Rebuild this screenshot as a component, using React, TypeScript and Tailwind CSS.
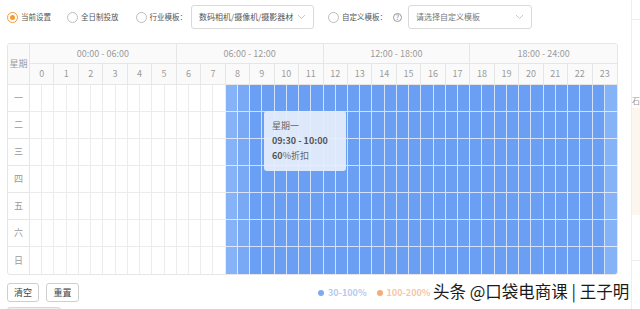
import React from 'react';

const days = ['一', '二', '三', '四', '五', '六', '日'];
const ranges = ['00:00 - 06:00', '06:00 - 12:00', '12:00 - 18:00', '18:00 - 24:00'];

function Radio({ checked, label }: { checked?: boolean; label: string }) {
    return (
        <label className="flex items-center gap-[3px] text-[7.5px] text-[#555] whitespace-nowrap">
            <span
                className={
                    checked
                        ? 'w-[11px] h-[11px] rounded-full border border-[#f39c34] flex items-center justify-center'
                        : 'w-[11px] h-[11px] rounded-full border border-[#bdbdbd]'
                }
            >
                {checked && <span className="w-[5px] h-[5px] rounded-full bg-[#f39c34]" />}
            </span>
            {label}
        </label>
    );
}

function Select({ text, placeholder, width }: { text: string; placeholder?: boolean; width: string }) {
    return (
        <div className={`${width} h-[24px] border border-[#d9d9d9] rounded-[3px] flex items-center justify-between pl-[7px] pr-[7px] bg-white`}>
            <span className={placeholder ? 'text-[8px] text-[#777] whitespace-nowrap' : 'text-[8px] text-[#555] whitespace-nowrap'}>{text}</span>
            <svg width="9" height="6" viewBox="0 0 9 6" fill="none" className="shrink-0">
                <path d="M1 1l3.5 3.5L8 1" stroke="#c8c8c8" strokeWidth="1" />
            </svg>
        </div>
    );
}

function cellColor(i: number) {
    if (i < 16) return 'bg-white border-[#ececec]';
    if (i === 16 || i === 47) return 'bg-[#86b3f7] border-white/70';
    if (i === 17) return 'bg-[#79a9f5] border-white/70';
    return 'bg-[#6b9ff3] border-white/70';
}

export default function App() {
    return (
        <div className="w-[640px] h-[309px] overflow-hidden bg-white flex" style={{ fontFamily: '"Noto Sans CJK SC", "Liberation Sans", sans-serif' }}>
            <div className="w-[631px] shrink-0 relative">
                {/* top options */}
                <div className="flex items-center h-[24px] mt-[5px] pl-[7px]">
                    <Radio checked label="当前设置" />
                    <div className="ml-[16px]"><Radio label="全日制投放" /></div>
                    <div className="ml-[17px] flex items-center gap-[4px]">
                        <Radio label="行业模板：" />
                        <Select text="数码相机/摄像机/摄影器材" width="w-[123px]" />
                    </div>
                    <div className="ml-[14px] flex items-center gap-[6px]">
                        <Radio label="自定义模板：" />
                        <span className="w-[9px] h-[9px] rounded-full border border-[#999] text-[7px] leading-none text-[#888] flex items-center justify-center">?</span>
                        <div className="ml-[0px]"><Select text="请选择自定义模板" placeholder width="w-[124px]" /></div>
                    </div>
                </div>

                {/* schedule table */}
                <div className="relative ml-[7px] mt-[14px] w-[611px] border border-[#e6e6e6] rounded-[3px] overflow-hidden">
                    <div className="grid grid-cols-[22px_repeat(48,minmax(0,1fr))] text-[9px] text-[#9a9a9a]">
                        <div className="row-span-2 bg-[#fafafa] border-r border-b border-[#e6e6e6] flex items-center justify-center">星期</div>
                        {ranges.map((r, i) => (
                            <div key={r} className={`col-span-12 h-[20px] bg-[#fafafa] border-b border-[#e6e6e6] flex items-center justify-center ${i < 3 ? 'border-r' : ''}`}>
                                {r}
                            </div>
                        ))}
                        {Array.from({ length: 24 }).map((_, h) => (
                            <div key={h} className={`col-span-2 h-[21px] bg-[#fafafa] border-b border-[#e6e6e6] flex items-center justify-center ${h < 23 ? 'border-r' : ''}`}>
                                {h}
                            </div>
                        ))}
                        {days.map((d, r) => (
                            <React.Fragment key={d}>
                                <div className={`h-[27px] border-r border-[#e6e6e6] flex items-center justify-center ${r < 6 ? 'border-b' : ''}`}>{d}</div>
                                {Array.from({ length: 48 }).map((_, i) => (
                                    <div key={i} className={`h-[27px] ${cellColor(i)} ${i < 47 ? 'border-r' : ''} ${r < 6 ? 'border-b' : ''}`} />
                                ))}
                            </React.Fragment>
                        ))}
                    </div>

                    {/* hover tooltip */}
                    <div className="absolute left-[256px] top-[67px] w-[82px] h-[60px] rounded-[3px] bg-[#e4edfb]/95 pl-[8px] pt-[7px] text-[9px] leading-[15px] text-[#666]">
                        <div>星期一</div>
                        <div className="font-bold text-[#555]">09:30 - 10:00</div>
                        <div><span className="font-bold text-[#555]">60</span>%折扣</div>
                    </div>
                </div>

                {/* footer */}
                <div className="flex items-center mt-[8px] pl-[7px]">
                    <button className="w-[32px] h-[19px] border border-[#cfcfcf] rounded-[3px] text-[9px] text-[#444] flex items-center justify-center">清空</button>
                    <button className="ml-[7px] w-[33px] h-[19px] border border-[#cfcfcf] rounded-[3px] text-[9px] text-[#444] flex items-center justify-center">重置</button>
                    <div className="ml-[239px] flex items-center gap-[4px] text-[9px] font-bold text-[#b4ccef]">
                        <span className="w-[6px] h-[6px] rounded-full bg-[#7eaaf0]" />
                        30-100%
                    </div>
                    <div className="ml-[10px] flex items-center gap-[4px] text-[9px] font-bold text-[#f6c7a6]">
                        <span className="w-[6px] h-[6px] rounded-full bg-[#f5ab7c]" />
                        100-200%
                    </div>
                </div>
                <div className="ml-[7px] mt-[5px] w-[54px] h-[10px] rounded-[3px] bg-[#eeeeee] border border-[#d9d9d9]" />

                {/* watermark */}
                <div className="absolute left-[433px] top-[279px] text-[16.5px] text-[#1a1a1a] whitespace-nowrap [text-shadow:0_0_2px_#fff,0_0_2px_#fff]">
                    头条 @口袋电商课 | 王子明
                </div>
            </div>

            {/* side panel edge */}
            <div className="flex-1 border-l border-[#eeeeee] flex flex-col overflow-hidden">
                <div className="h-[20px] border-b border-[#eeeeee]" />
                <div className="mt-[77px] text-[8px] text-[#999] leading-none whitespace-nowrap">石</div>
                <div className="mt-[3px] h-[107px] bg-[#fdf6ee]" />
                <div className="mt-[45px] border-b border-[#eeeeee]" />
            </div>
        </div>
    );
}
